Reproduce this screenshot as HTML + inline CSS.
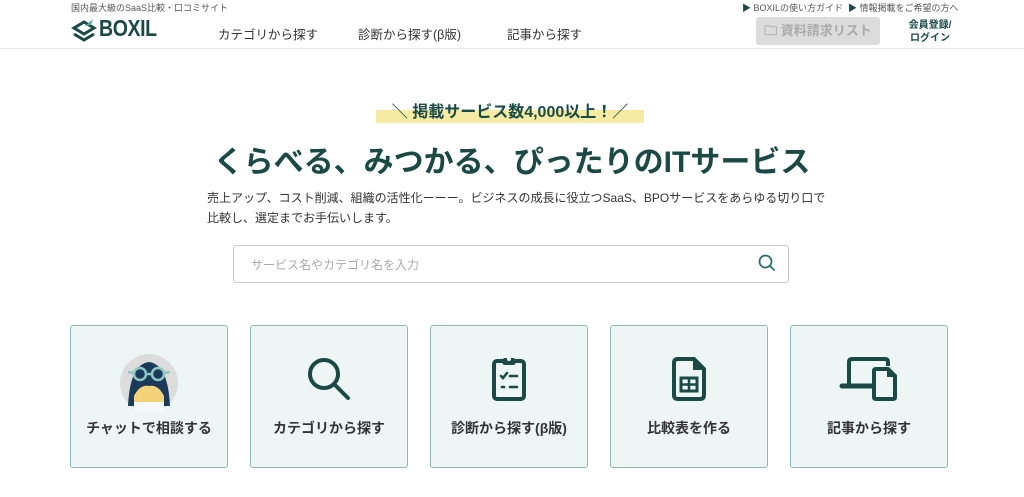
<!DOCTYPE html>
<html><head><meta charset="utf-8"><style>
*{margin:0;padding:0;box-sizing:border-box}
body{width:1024px;height:497px;background:#fff;font-family:"Liberation Sans","Noto Sans CJK JP",sans-serif;color:#333;position:relative;overflow:hidden}
.a{position:absolute}
.hdr{left:0;top:0;width:1024px;height:49px;border-bottom:1px solid #e6e6e6}
.nav{font-size:12.5px;color:#333;top:24px}
.card{position:absolute;top:325px;width:158px;height:143px;background:#eef6f5;border:1.5px solid #92b8b6;border-radius:3px}
.card .t{position:absolute;left:0;right:0;top:92px;text-align:center;font-size:14px;font-weight:bold;color:#333}
.card svg{position:absolute;left:50%;transform:translateX(-50%);top:28px}
</style></head><body>
<div class="a hdr"></div>
<div class="a" style="left:71px;top:1px;font-size:9px;color:#555">国内最大級のSaaS比較・口コミサイト</div>
<svg class="a" style="left:71px;top:16px" width="26" height="26" viewBox="0 0 26 26"><path d="M3 12 L13 6 L23 12 L13 18Z" fill="none" stroke="#1b4a45" stroke-width="3"/><path d="M3 18 L13 24 L23 18" fill="none" stroke="#1b4a45" stroke-width="3"/><path d="M14 10 L22 3 L20 9Z" fill="#5aa6a0"/></svg>
<div class="a" style="left:99px;top:15px;font-size:23px;font-weight:bold;color:#1b4a45;letter-spacing:-0.5px;transform:scaleX(0.85);transform-origin:left">BOXIL</div>
<div class="a nav" style="left:218px">カテゴリから探す</div>
<div class="a nav" style="left:358px">診断から探す(β版)</div>
<div class="a nav" style="left:507px">記事から探す</div>
<div class="a" style="left:742px;top:1px;font-size:9px;color:#555;white-space:nowrap"><span style="color:#1b4a45">▶</span> BOXILの使い方ガイド &nbsp;<span style="color:#1b4a45">▶</span> 情報掲載をご希望の方へ</div>
<div class="a" style="left:756px;top:17px;width:124px;height:28px;background:#dcdcdc;border-radius:3px;color:#aaa;font-size:13px;font-weight:bold;line-height:28px;text-align:center">🗀 資料請求リスト</div>
<div class="a" style="left:900px;top:19px;width:60px;text-align:center;font-size:10px;font-weight:bold;color:#1b4a45;line-height:13px">会員登録/<br>ログイン</div>
<div class="a" style="left:376px;top:110px;width:268px;height:13px;background:#f5eba3"></div>
<div class="a" style="left:376px;top:98px;width:268px;text-align:center;font-size:16px;font-weight:bold;color:#1b4a45">＼ 掲載サービス数4,000以上！／</div>
<div class="a" style="left:0;width:1024px;top:137px;text-align:center;font-size:30px;font-weight:bold;color:#1b4a45">くらべる、みつかる、ぴったりのITサービス</div>
<div class="a" style="left:207px;top:188px;width:640px;font-size:12px;line-height:20px;color:#333;white-space:nowrap">売上アップ、コスト削減、組織の活性化ーーー。ビジネスの成長に役立つSaaS、BPOサービスをあらゆる切り口で<br>比較し、選定までお手伝いします。</div>
<div class="a" style="left:233px;top:245px;width:556px;height:38px;border:1px solid #c8c8c8;border-radius:3px"></div>
<div class="a" style="left:251px;top:256px;font-size:12px;color:#aaa">サービス名やカテゴリ名を入力</div>
<svg class="a" style="left:758px;top:254px" width="18" height="18" viewBox="0 0 18 18"><circle cx="7.5" cy="7.5" r="6" fill="none" stroke="#2f6f6a" stroke-width="1.8"/><path d="M12 12 L16.5 16.5" stroke="#2f6f6a" stroke-width="1.8"/></svg>

<div class="card" style="left:70px"><svg width="58" height="58" viewBox="0 0 58 58"><circle cx="29" cy="29" r="29" fill="#dcdcdc"/><path d="M8 52 Q10 10 29 8 Q48 10 50 52 Z" fill="#1b3a5a"/><path d="M14 58 L14 42 Q20 30 29 32 Q38 30 44 42 L44 58Z" fill="#f5d27a"/><path d="M14 58 L14 48 L44 48 L44 58Z" fill="#f3f8fb"/><circle cx="20" cy="20" r="6" fill="none" stroke="#8fc7c3" stroke-width="2.5"/><circle cx="38" cy="20" r="6" fill="none" stroke="#8fc7c3" stroke-width="2.5"/><path d="M26 20 L32 20 M8 18 L14 19 M44 19 L50 18" stroke="#8fc7c3" stroke-width="2.5"/></svg><div class="t">チャットで相談する</div></div>
<div class="card" style="left:250px"><svg width="50" height="50" viewBox="0 0 50 50"><circle cx="20" cy="20" r="14" fill="none" stroke="#1b4a45" stroke-width="4"/><path d="M30 30 L44 44" stroke="#1b4a45" stroke-width="4" stroke-linecap="round"/></svg><div class="t">カテゴリから探す</div></div>
<div class="card" style="left:430px"><svg width="50" height="50" viewBox="0 0 50 50"><rect x="10" y="7" width="30" height="38" rx="3" fill="none" stroke="#1b4a45" stroke-width="4"/><rect x="18" y="4" width="14" height="7" rx="3" fill="#1b4a45"/><circle cx="25" cy="5" r="2" fill="#eef6f5"/><path d="M17 22 L19 24 L23 19 M26 22 L33 22 M18 33 L20 33 M26 33 L33 33" stroke="#1b4a45" stroke-width="2.6" fill="none" stroke-linecap="round"/></svg><div class="t">診断から探す(β版)</div></div>
<div class="card" style="left:610px"><svg width="50" height="50" viewBox="0 0 50 50"><path d="M14 5 L30 5 L40 15 L40 41 Q40 45 36 45 L14 45 Q10 45 10 41 L10 9 Q10 5 14 5Z" fill="none" stroke="#1b4a45" stroke-width="4"/><path d="M29 5 L29 16 L40 16Z" fill="#1b4a45"/><rect x="17" y="24" width="16" height="13" fill="none" stroke="#1b4a45" stroke-width="3"/><path d="M25 24 L25 37 M17 30.5 L33 30.5" stroke="#1b4a45" stroke-width="2.5"/></svg><div class="t">比較表を作る</div></div>
<div class="card" style="left:790px"><svg width="60" height="50" viewBox="0 0 60 50"><path d="M10 30 L10 8 Q10 5 13 5 L46 5 Q49 5 49 8 L49 12" fill="none" stroke="#1b4a45" stroke-width="4"/><path d="M3 32 L33 32" stroke="#1b4a45" stroke-width="5" stroke-linecap="round"/><path d="M37 15 L49 15 L56 22 L56 43 Q56 45 54 45 L37 45 Q35 45 35 43 L35 17 Q35 15 37 15Z" fill="none" stroke="#1b4a45" stroke-width="4"/><path d="M48 15 L48 23 L56 23Z" fill="#1b4a45"/></svg><div class="t">記事から探す</div></div>
</body></html>
